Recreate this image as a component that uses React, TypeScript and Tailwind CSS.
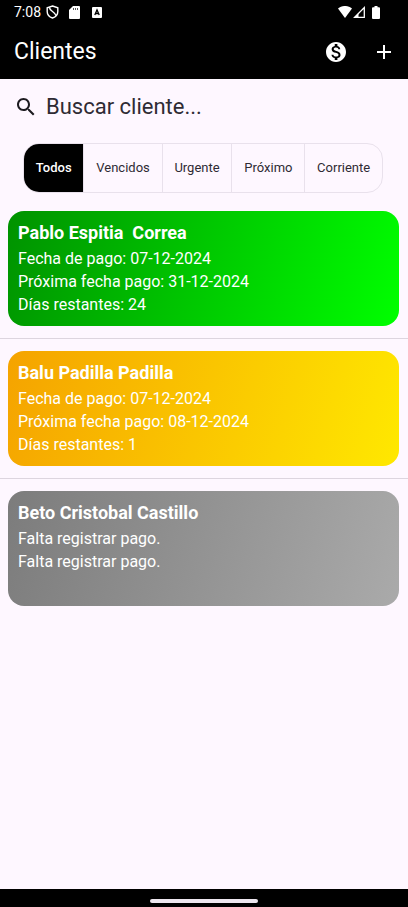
import { useState } from "react";

type Client = {
  name: string;
  lines: string[];
  gradient: string;
};

const filters = ["Todos", "Vencidos", "Urgente", "Próximo", "Corriente"];

const clients: Client[] = [
  {
    name: "Pablo Espitia  Correa",
    lines: ["Fecha de pago: 07-12-2024", "Próxima fecha pago: 31-12-2024", "Días restantes: 24"],
    gradient: "bg-[linear-gradient(106deg,#009200,#00ff00)]",
  },
  {
    name: "Balu Padilla Padilla",
    lines: ["Fecha de pago: 07-12-2024", "Próxima fecha pago: 08-12-2024", "Días restantes: 1"],
    gradient: "bg-[linear-gradient(106deg,#f5a300,#ffe800)]",
  },
  {
    name: "Beto Cristobal Castillo",
    lines: ["Falta registrar pago.", "Falta registrar pago."],
    gradient: "bg-[linear-gradient(106deg,#7c7c7c,#aaaaaa)]",
  },
];

function StatusBar() {
  return (
    <div className="flex h-6 items-center justify-between pr-7 pl-[14px] text-white">
      <div className="flex items-center">
        <span className="text-[14px] leading-5">7:08</span>
        <svg className="ml-[5px] h-[14px] w-[13px]" viewBox="0 0 13 14" fill="none" stroke="currentColor" strokeWidth="1.4" aria-hidden="true">
          <path d="M6.500 1 11.800 2.800V6.500C11.800 9.600 9.600 12 6.500 13 3.400 12 1.200 9.600 1.200 6.500V2.800Z" />
          <path d="M3.400 2.400C3.600 6.200 8.800 6.600 10 10.600" />
        </svg>
        <svg className="ml-[10px] h-[13px] w-[11px]" viewBox="0 0 11 13" aria-hidden="true">
          <path fill="currentColor" d="M4 0h6a1 1 0 0 1 1 1v11a1 1 0 0 1-1 1H1a1 1 0 0 1-1-1V4Z" />
          <path stroke="#555" strokeWidth="1" d="M4.500 2v2M6.500 2v2M8.500 2v2" />
        </svg>
        <svg className="ml-3 h-[11px] w-[10px]" viewBox="0 0 10 11" aria-hidden="true">
          <rect width="10" height="11" rx="1" fill="currentColor" />
          <path d="M2.800 8 5 2.800 7.200 8M3.600 6.500h2.800" fill="none" stroke="#000" strokeWidth="1.300" />
        </svg>
      </div>
      <div className="flex items-center">
        <svg className="h-3 w-[14px]" viewBox="0 0 14 12" aria-hidden="true">
          <path fill="currentColor" d="M0 2.600C4-.9 10-.9 14 2.600L7 12Z" />
        </svg>
        <svg className="ml-px h-3 w-3" viewBox="0 0 12 12" aria-hidden="true">
          <path fill="none" stroke="currentColor" strokeWidth="1.300" d="M11.300 1.600v9.700H1.600Z" />
          <path fill="currentColor" d="M1 11.500 5.500 7V11.500Z" />
        </svg>
        <svg className="ml-[7px] h-[13px] w-2" viewBox="0 0 8 13" aria-hidden="true">
          <path fill="currentColor" d="M2.500 0h3v1.300H7a1 1 0 0 1 1 1V12a1 1 0 0 1-1 1H1a1 1 0 0 1-1-1V2.300a1 1 0 0 1 1-1h1.500Z" />
        </svg>
      </div>
    </div>
  );
}

function AppBar() {
  return (
    <div className="flex h-[55px] items-center justify-between pr-3 pl-[14px] text-white">
      <h1 className="text-[23px] leading-7">Clientes</h1>
      <div className="flex items-center gap-6">
        <button type="button" aria-label="Pagos" className="flex size-6 items-center justify-center">
          <svg className="size-6" viewBox="0 0 24 24" fill="currentColor" aria-hidden="true">
            <path d="M12 2C6.480 2 2 6.480 2 12s4.480 10 10 10 10-4.480 10-10S17.520 2 12 2zm1.410 16.090V20h-2.670v-1.930c-1.710-.36-3.160-1.460-3.270-3.400h1.960c.1 1.050.82 1.870 2.650 1.870 1.960 0 2.400-.98 2.400-1.590 0-.83-.44-1.610-2.670-2.140-2.480-.6-4.180-1.620-4.180-3.670 0-1.720 1.390-2.840 3.110-3.210V4h2.670v1.950c1.860.45 2.790 1.860 2.850 3.390H14.300c-.05-1.110-.64-1.870-2.220-1.870-1.500 0-2.400.68-2.400 1.640 0 .84.65 1.390 2.670 1.910s4.180 1.390 4.180 3.910c-.01 1.830-1.380 2.830-3.120 3.160z" />
          </svg>
        </button>
        <button type="button" aria-label="Agregar cliente" className="flex size-6 items-center justify-center">
          <svg className="size-6" viewBox="0 0 24 24" fill="currentColor" aria-hidden="true">
            <path d="M19 13h-6v6h-2v-6H5v-2h6V5h2v6h6v2z" />
          </svg>
        </button>
      </div>
    </div>
  );
}

function SearchBox() {
  return (
    <label className="flex h-14 items-center gap-2 px-[14px] text-[#1d1b20]">
      <svg className="size-6 shrink-0" viewBox="0 0 24 24" fill="currentColor" aria-hidden="true">
        <path d="M15.500 14h-.79l-.28-.27C15.410 12.590 16 11.110 16 9.500 16 5.910 13.090 3 9.500 3S3 5.910 3 9.500 5.910 16 9.500 16c1.610 0 3.090-.59 4.230-1.570l.27.28v.79l5 4.990L20.490 19l-4.990-5zm-6 0C7.010 14 5 11.990 5 9.500S7.010 5 9.500 5 14 7.010 14 9.500 11.990 14 9.500 14z" />
      </svg>
      <input
        type="text"
        aria-label="Buscar cliente"
        placeholder="Buscar cliente..."
        className="w-full min-w-0 bg-transparent text-[22px] leading-7 outline-none placeholder:text-[#2f2b34]"
      />
    </label>
  );
}

function FilterBar() {
  const [selected, setSelected] = useState("Todos");
  return (
    <div className="mt-2 mr-[25px] ml-[23px] flex h-[50px] divide-x divide-[#e9e1ec] overflow-hidden rounded-2xl border border-[#e9e1ec]">
      {filters.map((filter) => (
        <button
          key={filter}
          type="button"
          aria-pressed={filter === selected}
          onClick={() => setSelected(filter)}
          className={
            filter === selected
              ? "flex-auto bg-black text-[13px] font-medium text-white"
              : "flex-auto text-[13px] text-[#2f2b34]"
          }
        >
          {filter}
        </button>
      ))}
    </div>
  );
}

function ClientCard({ client }: { client: Client }) {
  return (
    <article className={`mr-[9px] ml-2 min-h-[115px] rounded-2xl p-[10px] text-white ${client.gradient}`}>
      <h2 className="mb-[2px] text-[18px] leading-6 font-bold whitespace-pre-wrap">{client.name}</h2>
      {client.lines.map((line, index) => (
        <p key={index} className="text-[16px] leading-[23px]">
          {line}
        </p>
      ))}
    </article>
  );
}

export default function App() {
  return (
    <div className="flex min-h-screen flex-col bg-[#fef7ff] font-[Roboto,sans-serif]">
      <header className="bg-black">
        <StatusBar />
        <AppBar />
      </header>
      <main className="flex-1">
        <SearchBox />
        <FilterBar />
        <ul className="mt-[6px] divide-y divide-[#ddd5df]">
          {clients.map((client) => (
            <li key={client.name} className="py-3">
              <ClientCard client={client} />
            </li>
          ))}
        </ul>
      </main>
      <footer className="flex h-[18px] items-center justify-center bg-black pt-[6px]">
        <div className="h-1 w-[108px] rounded-full bg-[#ece6ee]" />
      </footer>
    </div>
  );
}
